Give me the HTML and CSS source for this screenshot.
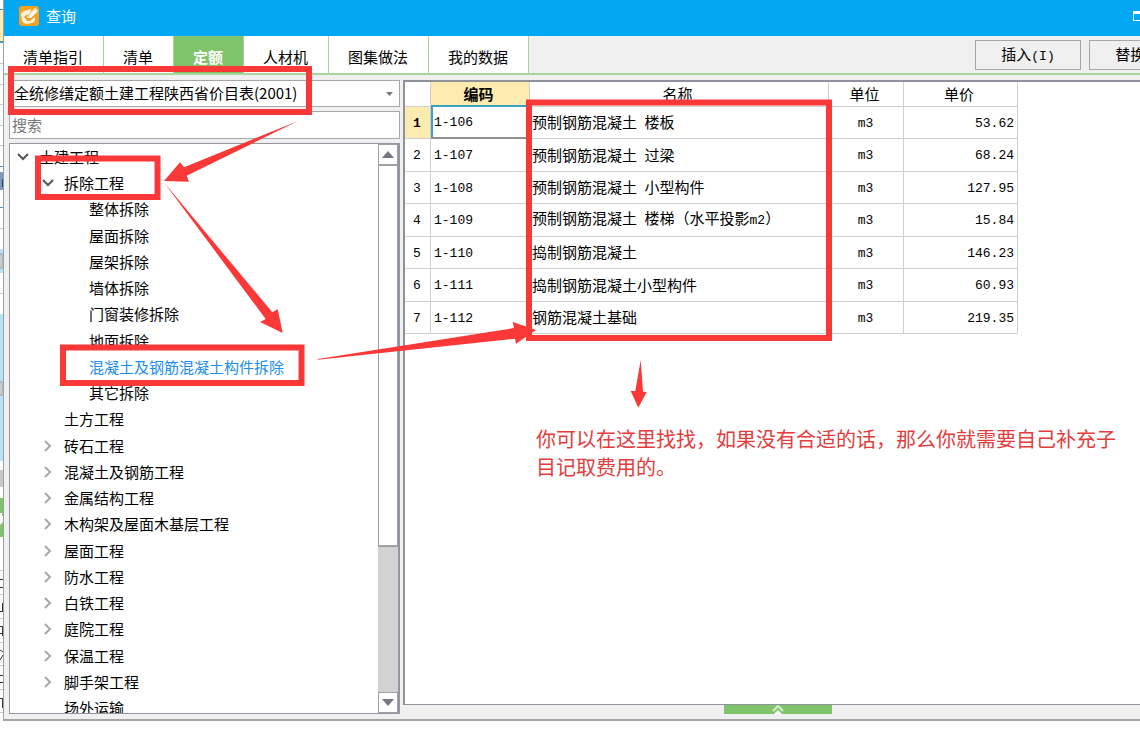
FILE: index.html
```html
<!DOCTYPE html>
<html lang="zh-CN">
<head>
<meta charset="utf-8">
<meta name="viewport" content="width=device-width, initial-scale=1">
<title>查询</title>
<link rel="stylesheet" href="styles.css">
</head>
<body>
<div class="screen">
  <svg class="behind" viewBox="0 0 3 733" preserveAspectRatio="xMinYMin slice" aria-hidden="true">
    <rect y="10" width="3" height="31" fill="#fdebb0"/>
    <rect y="9" width="3" height="1" fill="#3c9bc4"/>
    <rect y="41" width="3" height="2" fill="#3c9bc4"/>
    <path d="M0 63.500h3M0 84.500h3M0 104.500h3M0 125.500h3M0 145.500h3M0 228.500h3M0 293.500h3M0 570.500h3M0 594.500h3M0 618.500h3M0 642.500h3M0 665.500h3M0 689.500h3M0 712.500h3" stroke="#c8c8c8"/>
    <rect y="166" width="3" height="1" fill="#3c9bc4"/>
    <rect y="172" width="3" height="18" fill="#7d9cbd"/>
    <path d="M2.500 179v8" stroke="#28425f"/>
    <rect y="207" width="3" height="1" fill="#3c9bc4"/>
    <rect y="249" width="3" height="24" fill="#b5e2f5"/>
    <rect y="254" width="2" height="14" fill="#fff" stroke="#999"/>
    <rect y="314" width="3" height="147" fill="#b5e2f5"/>
    <rect y="382" width="2" height="13" fill="#fff" stroke="#999"/>
    <rect y="470" width="3" height="17" fill="#c8c8c8"/>
    <rect y="498" width="3" height="39" fill="#7fc36a"/>
    <path d="M0 513h2v3h1v6l-3 3z" fill="#fff"/>
    <path d="M0 579.500h3M0 587.500h3M0 611.500h3M0 626.500h3M0 633.500h3M0 650l3 2M0 660l3-5M0 675.500h3M0 682.500h3M0 698.500h3M2.500 603v9M2.500 627v9M2.500 698v10" stroke="#333"/>
  </svg>
  <main class="window">
    <header class="titlebar">
      <svg class="logo" viewBox="0 0 20 20" aria-hidden="true">
        <rect width="20" height="20" rx="3" fill="#f7a11d"/>
        <path d="M12 3L5 5Q2 6 2 9l1 5q1 4 5 4l5-1q3-1 3-4v-2l-5 4H8L5 11l2-2 4-1z" fill="#fff3dc"/>
        <path d="M8 12l1-4 7-6 3 3-7 7z" fill="#fff"/>
        <path d="M9 11l1-3 6-5" fill="none" stroke="#f7b44a"/>
      </svg>
      <h1 class="title">查询</h1>
      <button class="maximize" type="button" aria-label="最大化"></button>
    </header>
    <div class="toolbar">
      <nav class="tabs">
        <button class="tab" type="button">清单指引</button>
        <button class="tab" type="button">清单</button>
        <button class="tab tab-active" type="button">定额</button>
        <button class="tab" type="button">人材机</button>
        <button class="tab" type="button">图集做法</button>
        <button class="tab" type="button">我的数据</button>
      </nav>
      <div class="actions">
        <button class="action" type="button">插入<span class="mono">(I)</span></button>
        <button class="action" type="button">替换<span class="mono">(R)</span></button>
      </div>
    </div>
    <div class="content">
      <aside class="side">
        <div class="combo">
          <select class="combo-select" aria-label="定额库">
            <option>全统修缮定额土建工程陕西省价目表(2001)</option>
          </select>
          <svg class="combo-arrow" viewBox="0 0 7 4" aria-hidden="true"><path d="M0 0h7L3.500 4z" fill="#777"/></svg>
        </div>
        <input class="search" type="text" placeholder="搜索" aria-label="搜索">
        <div class="tree-box">
          <ul class="tree">
            <li class="node open"><svg class="chev" viewBox="0 0 12 12"><path d="M1 3l5 5 5-5"/></svg>土建工程</li>
            <li class="node level-2 open"><svg class="chev" viewBox="0 0 12 12"><path d="M1 3l5 5 5-5"/></svg>拆除工程</li>
            <li class="node level-3">整体拆除</li>
            <li class="node level-3">屋面拆除</li>
            <li class="node level-3">屋架拆除</li>
            <li class="node level-3">墙体拆除</li>
            <li class="node level-3">门窗装修拆除</li>
            <li class="node level-3">地面拆除</li>
            <li class="node level-3 selected">混凝土及钢筋混凝土构件拆除</li>
            <li class="node level-3">其它拆除</li>
            <li class="node level-2"><span class="chev"></span>土方工程</li>
            <li class="node level-2"><svg class="chev" viewBox="0 0 12 12"><path d="M3 1l5 5-5 5"/></svg>砖石工程</li>
            <li class="node level-2"><svg class="chev" viewBox="0 0 12 12"><path d="M3 1l5 5-5 5"/></svg>混凝土及钢筋工程</li>
            <li class="node level-2"><svg class="chev" viewBox="0 0 12 12"><path d="M3 1l5 5-5 5"/></svg>金属结构工程</li>
            <li class="node level-2"><svg class="chev" viewBox="0 0 12 12"><path d="M3 1l5 5-5 5"/></svg>木构架及屋面木基层工程</li>
            <li class="node level-2"><svg class="chev" viewBox="0 0 12 12"><path d="M3 1l5 5-5 5"/></svg>屋面工程</li>
            <li class="node level-2"><svg class="chev" viewBox="0 0 12 12"><path d="M3 1l5 5-5 5"/></svg>防水工程</li>
            <li class="node level-2"><svg class="chev" viewBox="0 0 12 12"><path d="M3 1l5 5-5 5"/></svg>白铁工程</li>
            <li class="node level-2"><svg class="chev" viewBox="0 0 12 12"><path d="M3 1l5 5-5 5"/></svg>庭院工程</li>
            <li class="node level-2"><svg class="chev" viewBox="0 0 12 12"><path d="M3 1l5 5-5 5"/></svg>保温工程</li>
            <li class="node level-2"><svg class="chev" viewBox="0 0 12 12"><path d="M3 1l5 5-5 5"/></svg>脚手架工程</li>
            <li class="node level-2"><span class="chev"></span>场外运输</li>
          </ul>
          <div class="scrollbar">
            <button class="scroll-btn" type="button" aria-label="向上滚动"><svg viewBox="0 0 12 7"><path d="M0 7l6-7 6 7z"/></svg></button>
            <div class="thumb"></div>
            <div class="track"></div>
            <button class="scroll-btn" type="button" aria-label="向下滚动"><svg viewBox="0 0 12 7"><path d="M0 0l6 7 6-7z"/></svg></button>
          </div>
        </div>
      </aside>
      <section class="main">
        <div class="pane">
          <table class="grid">
            <colgroup><col class="c-index"><col class="c-code"><col class="c-name"><col class="c-unit"><col class="c-price"></colgroup>
            <thead>
              <tr><th></th><th class="current">编码</th><th>名称</th><th>单位</th><th>单价</th></tr>
            </thead>
            <tbody>
              <tr><th class="current" scope="row">1</th><td class="code focus">1-106</td><td>预制钢筋混凝土&ensp;楼板</td><td class="unit">m3</td><td class="price">53.62</td></tr>
              <tr><th scope="row">2</th><td class="code">1-107</td><td>预制钢筋混凝土&ensp;过梁</td><td class="unit">m3</td><td class="price">68.24</td></tr>
              <tr><th scope="row">3</th><td class="code">1-108</td><td>预制钢筋混凝土&ensp;小型构件</td><td class="unit">m3</td><td class="price">127.95</td></tr>
              <tr><th scope="row">4</th><td class="code">1-109</td><td>预制钢筋混凝土&ensp;楼梯（水平投影<span class="mono">m2</span>）</td><td class="unit">m3</td><td class="price">15.84</td></tr>
              <tr><th scope="row">5</th><td class="code">1-110</td><td>捣制钢筋混凝土</td><td class="unit">m3</td><td class="price">146.23</td></tr>
              <tr><th scope="row">6</th><td class="code">1-111</td><td>捣制钢筋混凝土小型构件</td><td class="unit">m3</td><td class="price">60.93</td></tr>
              <tr><th scope="row">7</th><td class="code">1-112</td><td>钢筋混凝土基础</td><td class="unit">m3</td><td class="price">219.35</td></tr>
            </tbody>
          </table>
        </div>
        <button class="handle" type="button" aria-label="展开"><svg viewBox="0 0 12 9"><path d="M1 6l5-5 5 5" fill="none" stroke="#d5efcb" stroke-width="2"/><path d="M2 9l4-4 4 4z" fill="#fff"/></svg></button>
      </section>
    </div>
  </main>

  <svg class="marks" width="1140" height="733" viewBox="0 0 1140 733" aria-hidden="true">
    <g fill="none" stroke="#fb3838" stroke-width="6">
      <rect x="11" y="69" width="298" height="43"/>
      <rect x="38" y="158.500" width="119.500" height="38.500"/>
      <rect x="63" y="347.500" width="238.500" height="35.500"/>
      <rect x="529" y="102.500" width="300" height="235.500"/>
    </g>
    <g fill="#fb3838">
      <path d="M298 121L184 167.300 180 162.300 164 181 189 181.700 186.700 175.700z"/>
      <path d="M164 182.500L272.300 312.300 277.700 309.300 282.700 333 260 322 265.700 319z"/>
      <path d="M317.700 359L514 328 512.700 322 536 330 516 343.700 515 338.700 317.700 359.800z"/>
      <path d="M640.700 360L643 391.700 646.700 392 638.300 407.700 630.700 391 635.300 391z"/>
    </g>
  </svg>
  <p class="note">你可以在这里找找，如果没有合适的话，那么你就需要自己补充子<br>目记取费用的。</p>
</div>
</body>
</html>
```
FILE: styles.css
```css
* { box-sizing: border-box; }

body {
  margin: 0;
  background: #fff;
  color: #000;
  font-family: "Noto Sans CJK SC", sans-serif;
  font-size: 15px;
  line-height: 24px;
  overflow: hidden;
}

button, input, select {
  margin: 0;
  padding: 0;
  border: 0;
  border-radius: 0;
  font: inherit;
  color: inherit;
  background: none;
}

.mono { font-family: "Liberation Mono", monospace; font-size: 13px; }

.screen {
  position: relative;
  display: flex;
  height: 100vh;
  padding-bottom: 12px;
  overflow: hidden;
}

/* Sliver of the window that sits behind the dialog */
.behind { flex: none; width: 3px; height: 733px; }

.window {
  flex: 1;
  min-width: 0;
  display: flex;
  flex-direction: column;
  border-left: 1px solid #a0a0a0;
  border-bottom: 2px solid #a6a6a6;
  background: #f0f0f0;
}

.titlebar {
  flex: none;
  display: flex;
  align-items: center;
  height: 36px;
  padding: 0 0 4px 15px;
  background: #02a8f1;
  color: #fff;
}

.logo { width: 20px; height: 20px; }
.title { flex: 1; margin: 0 0 0 7px; font-size: 15px; font-weight: 400; }
.maximize { width: 7px; height: 10px; border: 1px solid #fff; border-top-width: 3px; border-right: 0; }

.toolbar {
  flex: none;
  display: flex;
  justify-content: space-between;
  height: 39px;
  border-bottom: 2px solid #a9d59c;
  overflow: hidden;
}

.tabs { display: flex; }

.tab {
  padding: 4px 20px 0 19px;
  border-right: 1px solid #a9d59c;
  background: #fff;
}

.tab-active { background: #7fc36a; color: #fff; font-weight: 700; }

.actions {
  display: flex;
  flex: none;
  gap: 8px;
  width: 165px;
  padding: 4px 0 3px;
}

.action {
  flex: none;
  width: 106px;
  border: 1px solid #a6a6a6;
}

.content {
  flex: 1;
  display: flex;
  gap: 3px;
  min-height: 0;
  padding: 5px 0 5px 5px;
}

.side {
  flex: none;
  display: flex;
  flex-direction: column;
  gap: 4px;
  width: 391px;
}

.combo {
  flex: none;
  display: flex;
  align-items: center;
  height: 27px;
  padding-right: 6px;
  border: 1px solid #a6a6a6;
  background: #fff;
}

.combo-select { flex: 1; appearance: none; padding: 0 0 2px 4px; }
.combo-arrow { width: 7px; height: 4px; }

.search {
  flex: none;
  height: 28px;
  padding: 0 2px 2px;
  border: 1px solid #a6a6a6;
  background: #fff;
}

.search::placeholder { color: #777; opacity: 1; }

.tree-box {
  flex: 1;
  display: flex;
  min-height: 0;
  border: 1px solid #9296a0;
  border-right-width: 2px;
  background: #fff;
}

.tree {
  flex: 1;
  margin: 0;
  padding: 0 0 0 7px;
  list-style: none;
  overflow: hidden;
}

.node { display: flex; align-items: center; height: 26px; }
.node:nth-child(4n) { height: 27px; }
.level-2 { padding-left: 25px; }
.level-3 { padding-left: 72px; }
.selected { color: #1a8ef0; }

.chev {
  flex: none;
  width: 12px;
  height: 12px;
  margin-right: 10px;
  fill: none;
  stroke: #a8a8a8;
  stroke-width: 2;
}

.open .chev { stroke: #555; }

.scrollbar {
  flex: none;
  display: flex;
  flex-direction: column;
  width: 20px;
  background: #d2d2d2;
}

.scroll-btn {
  flex: none;
  display: flex;
  align-items: center;
  justify-content: center;
  height: 21px;
  border: 1px solid #a0a0a0;
  background: #fff;
}

.scroll-btn svg { width: 12px; height: 7px; fill: #777783; }

.thumb { flex: 382; border: 1px solid #a0a0a0; border-bottom-width: 2px; background: #fff; }
.track { flex: 146; }

.main {
  flex: 1;
  display: flex;
  flex-direction: column;
  align-items: center;
  min-width: 0;
}

.pane {
  flex: 1;
  align-self: stretch;
  min-height: 0;
  border: 2px solid #8f929a;
  border-right: 0;
  border-bottom-width: 1px;
  background: #fff;
}

.handle {
  display: flex;
  justify-content: center;
  width: 108px;
  height: 9px;
  margin: 0 0 0 12px;
  background: #7fc36a;
}

.handle svg { width: 12px; height: 9px; }

.grid {
  width: 613px;
  border-collapse: separate;
  border-spacing: 0;
  table-layout: fixed;
}

.c-index { width: 26px; }
.c-code { width: 99px; }
.c-name { width: 299px; }
.c-unit { width: 75px; }
.c-price { width: 114px; }

.grid th, .grid td {
  height: 32px;
  padding: 0 3px 1px;
  border-right: 1px solid #d0d0d0;
  border-bottom: 1px solid #d0d0d0;
  font-weight: 400;
  white-space: nowrap;
}

.grid tbody tr:nth-child(even) > * { height: 33px; }
.grid thead th { height: 25px; padding: 0 3px 0 0; line-height: 22px; }
.grid td { padding-left: 2px; }
.grid tbody th, .grid .code, .grid .unit, .grid .price {
  padding-top: 2px;
  padding-bottom: 0;
  font-family: "Liberation Mono", monospace;
  font-size: 13px;
}
.grid tbody th { padding-left: 2px; }
.grid .code { padding-left: 3px; }
.grid .unit { text-align: center; }
.grid .price { text-align: right; }
.grid .current { background: #fdebb0; font-weight: 700; }
.grid thead .current { border-bottom: 2px solid #3aa3c2; }
.grid .focus { border-bottom: 2px solid #8f8f8f; box-shadow: inset 2px 0 #3aa3c2; }

/* Review marks drawn over the dialog */
.marks { position: absolute; left: 0; top: 0; pointer-events: none; }

.note {
  position: absolute;
  left: 536px;
  top: 425px;
  margin: 0;
  color: #e33c3c;
  font-size: 20px;
  line-height: 28px;
  white-space: nowrap;
}
```
